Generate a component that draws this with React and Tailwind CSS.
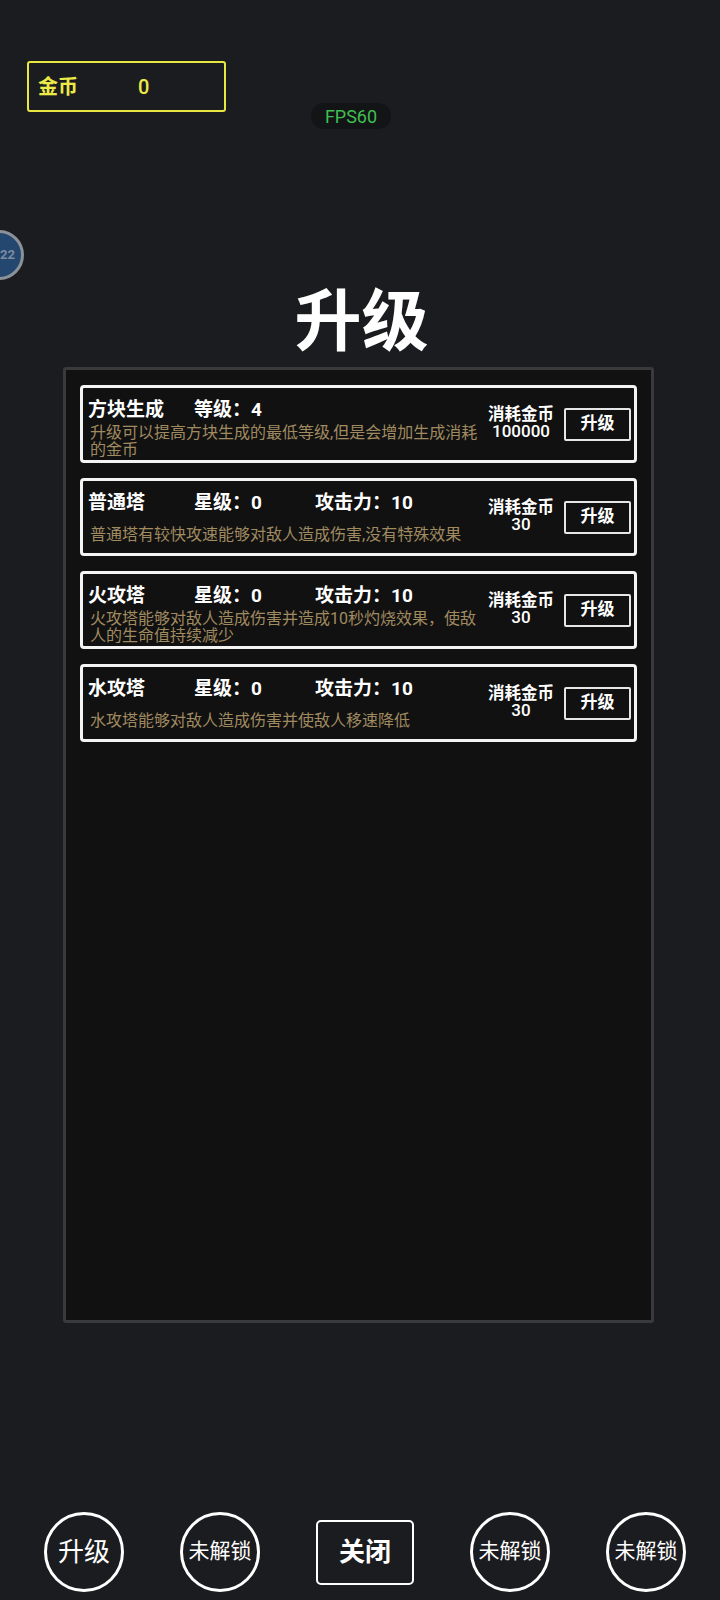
const items = [
  {
    name: '方块生成',
    stat: '等级：4',
    attack: null,
    desc: '升级可以提高方块生成的最低等级,但是会增加生成消耗的金币',
    cost: '100000',
  },
  {
    name: '普通塔',
    stat: '星级：0',
    attack: '攻击力：10',
    desc: '普通塔有较快攻速能够对敌人造成伤害,没有特殊效果',
    cost: '30',
  },
  {
    name: '火攻塔',
    stat: '星级：0',
    attack: '攻击力：10',
    desc: '火攻塔能够对敌人造成伤害并造成10秒灼烧效果，使敌人的生命值持续减少',
    cost: '30',
  },
  {
    name: '水攻塔',
    stat: '星级：0',
    attack: '攻击力：10',
    desc: '水攻塔能够对敌人造成伤害并使敌人移速降低',
    cost: '30',
  },
];

const UpgradeCard = ({ item }) => (
  <div className="flex h-[78px] items-stretch rounded-[4px] border-[3px] border-[#f4f4f4] pl-[5px] pr-[3px]">
    <div className="flex w-[398px] flex-col pt-[9px]">
      <div className="flex h-[26px] items-center text-[19px] font-bold leading-[26px] text-white">
        <span className="w-[106px]">{item.name}</span>
        <span className="w-[121px]">{item.stat}</span>
        {item.attack && <span>{item.attack}</span>}
      </div>
      <div className="flex h-[36px] items-center pl-[2px] text-[16px] leading-[17px] text-[#a08a60]">
        <p>{item.desc}</p>
      </div>
    </div>
    <div className="flex w-[70px] flex-col items-center justify-center pb-[2px] leading-[17px] text-white">
      <span className="text-[16.5px] font-bold">消耗金币</span>
      <span className="text-[17px] font-medium">{item.cost}</span>
    </div>
    <div className="flex items-center pl-[8px]">
      <button className="flex h-[33px] w-[67px] items-center justify-center rounded-[2px] border-2 border-[#e6e6e6] text-[17px] font-bold text-white">
        升级
      </button>
    </div>
  </div>
);

const RoundButton = ({ label, small }) => (
  <button
    className={
      small
        ? 'flex h-[80px] w-[80px] items-center justify-center whitespace-nowrap rounded-full border-[3px] border-white text-[21px] text-white'
        : 'flex h-[80px] w-[80px] items-center justify-center whitespace-nowrap rounded-full border-[3px] border-white text-[26px] text-white'
    }
  >
    {label}
  </button>
);

export default function App() {
  return (
    <div className="relative min-h-[1600px] overflow-hidden bg-[#1b1c1f] font-[Roboto,'Noto_Sans_CJK_SC',sans-serif]">
      {/* top bar */}
      <div className="flex items-start">
        <div className="ml-[27px] mt-[61px] flex h-[51px] w-[199px] items-center rounded-[3px] border-2 border-[#e8e640] pl-[9px] text-[20px] text-[#ecea48]">
          <span className="w-[100px] font-bold">金币</span>
          <span className="font-medium">0</span>
        </div>
        <div className="ml-[85px] mt-[103px] flex h-[26px] w-[80px] items-center justify-center rounded-full bg-[#131416] text-[18px] text-[#3fbf52]">
          FPS60
        </div>
      </div>

      {/* avatar bubble */}
      <div className="absolute left-[-26px] top-[230px] flex h-[50px] w-[50px] items-center justify-end rounded-full border-[3px] border-[#8a9199] bg-[#244770] pr-[6px] text-[13px] font-bold text-[#7d8ba0]">
        22
      </div>

      <h1 className="ml-[3px] mt-[160px] text-center text-[67px] font-bold leading-[67px] text-white">升级</h1>

      <div className="ml-[63px] mt-[11px] flex h-[956px] w-[591px] flex-col gap-[15px] rounded-[3px] border-[3px] border-[#3a3a3c] bg-[#111111] px-[14px] pt-[15px]">
        {items.map((item) => (
          <UpgradeCard key={item.name} item={item} />
        ))}
      </div>

      <div className="mt-[189px] flex items-center gap-[56px] pl-[44px]">
        <RoundButton label="升级" />
        <RoundButton label="未解锁" small />
        <button className="flex h-[65px] w-[98px] items-center justify-center rounded-[5px] border-2 border-white text-[26px] font-bold text-white">
          关闭
        </button>
        <RoundButton label="未解锁" small />
        <RoundButton label="未解锁" small />
      </div>
    </div>
  );
}
